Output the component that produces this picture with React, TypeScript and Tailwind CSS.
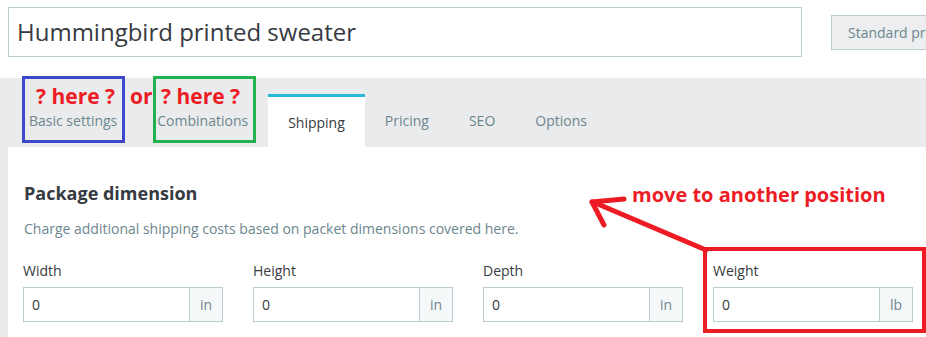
import React from "react";

const fields = [
  { label: "Width", unit: "in" },
  { label: "Height", unit: "in" },
  { label: "Depth", unit: "in" },
  { label: "Weight", unit: "lb" },
];

const tabs = ["Basic settings", "Combinations", "Shipping", "Pricing", "SEO", "Options"];

export default function App() {
  return (
    <div className="relative w-[926px] h-[337px] overflow-hidden bg-white font-['Open_Sans',sans-serif] flex flex-col">
      {/* Header */}
      <div className="h-[78px] flex items-start shrink-0">
        <div className="mt-[7px] ml-[8px] w-[794px] h-[50px] shrink-0 border border-[#bbcdd2] flex items-center pl-[8px] text-[24px] text-[#363a41]">
          Hummingbird printed sweater
        </div>
        <div className="mt-[15px] ml-[29px] h-[35px] shrink-0 px-4 border border-[#bbcdd2] bg-[#eceef0] flex items-center text-[14px] text-[#6c868e] whitespace-nowrap">
          Standard product
        </div>
      </div>

      {/* Tabs + panel */}
      <div className="flex-1 flex flex-col bg-[#eaebec] pl-2">
        <div className="h-[69px] flex items-end pl-[1px] shrink-0">
          {tabs.map((t) =>
            t === "Shipping" ? (
              <div
                key={t}
                className="h-[53px] px-5 flex items-center bg-white border-t-[3px] border-[#25b9d7] text-[14px] text-[#363a41]"
              >
                {t}
              </div>
            ) : (
              <div key={t} className="h-[53px] px-5 flex items-center text-[14px] text-[#6c868e]">
                {t}
              </div>
            )
          )}
        </div>
        <div className="flex-1 bg-white pl-[15px] pt-[34px]">
          <h2 className="text-[18px] leading-[24px] font-bold text-[#363a41] pl-[1px]">Package dimension</h2>
          <p className="mt-[14px] text-[14px] leading-[20px] text-[#6c868e] pl-[1px]">
            Charge additional shipping costs based on packet dimensions covered here.
          </p>
          <div className="mt-[22px] flex gap-[30px]">
            {fields.map((f) => (
              <div key={f.label} className="w-[200px]">
                <div className="text-[14px] leading-[20px] text-[#363a41] mb-[6px]">{f.label}</div>
                <div className="flex h-[35px] border border-[#bbcdd2]">
                  <div className="flex-1 flex items-center pl-[8px] text-[14px] text-[#363a41]">0</div>
                  <div className="w-[33px] border-l border-[#bbcdd2] bg-[#f5f8f9] flex items-center justify-center text-[14px] text-[#6c868e]">
                    {f.unit}
                  </div>
                </div>
              </div>
            ))}
          </div>
        </div>
      </div>

      {/* Annotations */}
      <div className="absolute left-[22px] top-[76px] w-[103px] h-[67px] border-[3px] border-[#3f48cc]" />
      <div className="absolute left-[153px] top-[76px] w-[103px] h-[67px] border-[3px] border-[#22b14c]" />
      <span className="absolute left-[36px] top-[84px] text-[21px] leading-[24px] font-bold text-[#ed1c24] whitespace-nowrap">? here ?</span>
      <span className="absolute left-[130px] top-[84px] text-[21px] leading-[24px] font-bold text-[#ed1c24]">or</span>
      <span className="absolute left-[161px] top-[84px] text-[21px] leading-[24px] font-bold text-[#ed1c24] whitespace-nowrap">? here ?</span>
      <span className="absolute left-[632px] top-[182px] text-[20px] leading-[26px] font-bold text-[#ed1c24] whitespace-nowrap">move to another position</span>
      <div className="absolute left-[703px] top-[247px] w-[223px] h-[86px] border-[4px] border-[#ed1c24]" />
      <svg className="absolute left-0 top-0" width="926" height="337" viewBox="0 0 926 337">
        <g stroke="#ed1c24" strokeWidth="5" strokeLinecap="round" fill="none">
          <line x1="593" y1="202" x2="706" y2="250" />
          <line x1="592" y1="202" x2="624" y2="199" />
          <line x1="592" y1="202" x2="604" y2="225" />
        </g>
      </svg>
    </div>
  );
}
